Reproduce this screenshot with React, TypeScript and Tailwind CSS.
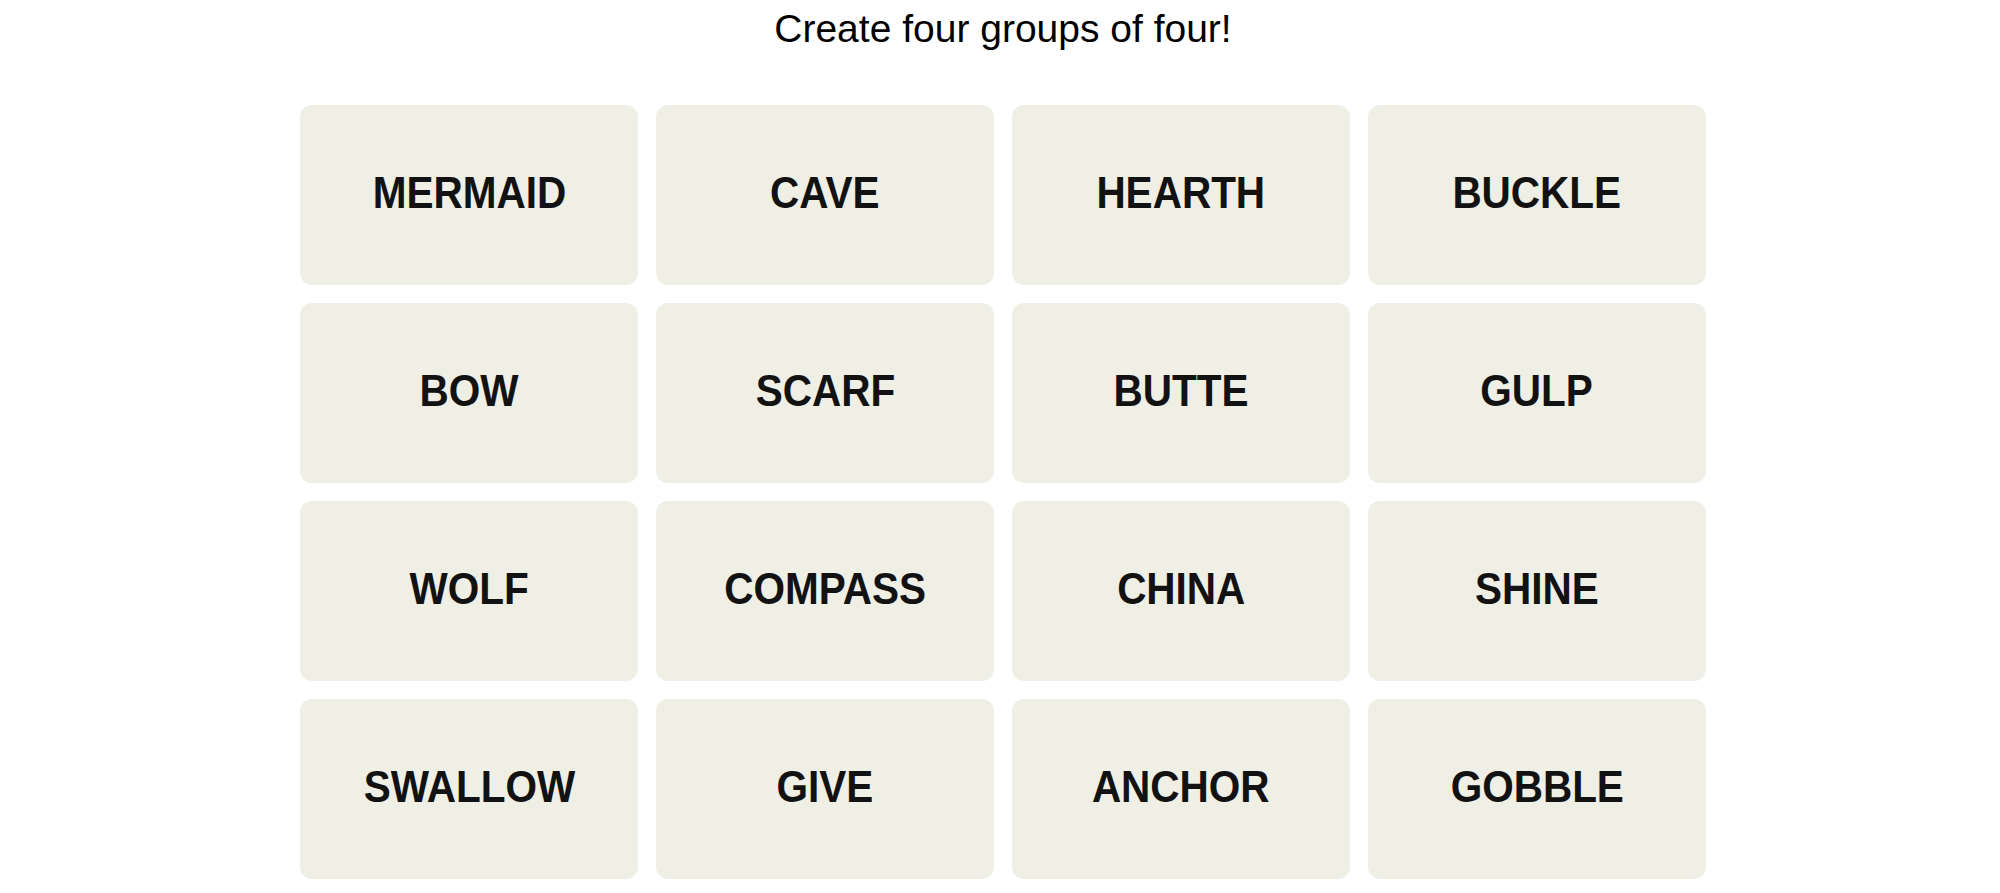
import React from 'react';

const words = [
  'MERMAID', 'CAVE', 'HEARTH', 'BUCKLE',
  'BOW', 'SCARF', 'BUTTE', 'GULP',
  'WOLF', 'COMPASS', 'CHINA', 'SHINE',
  'SWALLOW', 'GIVE', 'ANCHOR', 'GOBBLE',
];

const Tile = ({ word }: { word: string }) => (
  <button className="flex h-[180px] w-[338px] items-center justify-center rounded-[12px] bg-[#efefe6]">
    <span className="mb-[5px] inline-block scale-x-[0.9] text-[45px] font-bold leading-none text-[#121212]">{word}</span>
  </button>
);

export default function App() {
  return (
    <div
      className="min-h-[893px] w-full bg-white pl-[6px]"
      style={{ fontFamily: '"Liberation Sans", Arial, sans-serif' }}
    >
      <h2 className="pt-[10px] text-center text-[39px] font-normal leading-[38px] text-black">
        Create four groups of four!
      </h2>
      {/* 4x4 board of words */}
      <div className="mt-[57px] flex justify-center">
        <div className="grid grid-cols-[repeat(4,338px)] gap-[18px]">
          {words.map((w) => (
            <Tile key={w} word={w} />
          ))}
        </div>
      </div>
    </div>
  );
}
